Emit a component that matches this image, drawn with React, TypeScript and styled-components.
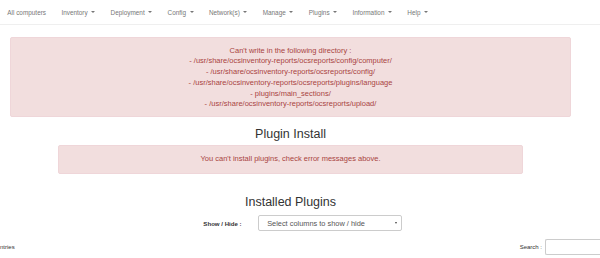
import styled, { createGlobalStyle } from "styled-components";

const menuItems = [
    { label: "All computers", dropdown: false },
    { label: "Inventory", dropdown: true },
    { label: "Deployment", dropdown: true },
    { label: "Config", dropdown: true },
    { label: "Network(s)", dropdown: true },
    { label: "Manage", dropdown: true },
    { label: "Plugins", dropdown: true },
    { label: "Information", dropdown: true },
    { label: "Help", dropdown: true },
];

const unwritableDirs = [
    "/usr/share/ocsinventory-reports/ocsreports/config/computer/",
    "/usr/share/ocsinventory-reports/ocsreports/config/",
    "/usr/share/ocsinventory-reports/ocsreports/plugins/language",
    "plugins/main_sections/",
    "/usr/share/ocsinventory-reports/ocsreports/upload/",
];

const App = () => {
    return (
        <>
            <GlobalStyle />
            <NavBar>
                {menuItems.map(item => (
                    <NavItem key={item.label}>
                        {item.label}
                        {item.dropdown && <Caret />}
                    </NavItem>
                ))}
            </NavBar>

            <Main>
                <Alert>
                    <AlertLine>Can't write in the following directory :</AlertLine>
                    {unwritableDirs.map(dir => (
                        <AlertLine key={dir}>- {dir}</AlertLine>
                    ))}
                </Alert>

                <Heading>Plugin Install</Heading>

                <Alert $inset>
                    <AlertLine>You can't install plugins, check error messages above.</AlertLine>
                </Alert>

                <Heading $spaced>Installed Plugins</Heading>

                <FilterRow>
                    <FilterLabel>Show / Hide :</FilterLabel>
                    <SelectBox>
                        Select columns to show / hide
                        <SelectCaret />
                    </SelectBox>
                </FilterRow>
            </Main>

            <TableTools>
                <SmallText>ntries</SmallText>
                <SearchGroup>
                    <SmallText>Search :</SmallText>
                    <SearchInput type="text" />
                </SearchGroup>
            </TableTools>
        </>
    );
};

const GlobalStyle = createGlobalStyle`
  html, body {
    margin: 0;
    padding: 0;
    background: #fff;
    overflow: hidden;
  }
  body {
    font-family: "Liberation Sans", Arial, sans-serif;
    color: #333;
  }
  * {
    box-sizing: border-box;
  }
`;

const NavBar = styled.nav`
  display: flex;
  align-items: center;
  height: 25px;
  background: #fff;
  border-bottom: 1px solid #efefef;
`;

const NavItem = styled.div`
  display: flex;
  align-items: center;
  padding: 0 7.7px;
  font-size: 6.4px;
  color: #777;
  white-space: nowrap;
  &:first-child {
    padding-left: 7.3px;
  }
`;

const Caret = styled.span`
  display: inline-block;
  margin-left: 3.5px;
  width: 0;
  height: 0;
  border-top: 2px solid #777;
  border-left: 2px solid transparent;
  border-right: 2px solid transparent;
`;

const Main = styled.main`
  width: 581px;
  padding: 0 10px;
  display: flex;
  flex-direction: column;
`;

const Alert = styled.div<{ $inset?: boolean }>`
  margin: ${props => (props.$inset ? "4.3px 48px 0" : "12px 0 0")};
  padding: ${props => (props.$inset ? "8px 8px" : "7.7px 8px 5.6px")};
  background-color: #f2dede;
  border: 1px solid #efd6d9;
  border-radius: 2px;
  color: #a94442;
  text-align: center;
  font-size: 7.5px;
  line-height: 10.7px;
`;

const AlertLine = styled.div`
  white-space: nowrap;
`;

const Heading = styled.h3<{ $spaced?: boolean }>`
  margin: ${props => (props.$spaced ? "20.7px" : "10.7px")} 0 0;
  font-size: 12.5px;
  line-height: 14px;
  font-weight: 500;
  color: #333;
  text-align: center;
`;

const FilterRow = styled.div`
  display: flex;
  align-items: center;
  justify-content: center;
  gap: 16px;
  margin-top: 6px;
  padding-left: 24px;
`;

const FilterLabel = styled.label`
  font-size: 6.1px;
  font-weight: bold;
  color: #333;
`;

const SelectBox = styled.div`
  display: flex;
  align-items: center;
  justify-content: space-between;
  width: 144px;
  height: 16.6px;
  padding: 0 4px 0 8.5px;
  border: 1px solid #ccc;
  border-radius: 2px;
  background: #fff;
  font-size: 7.4px;
  color: #555;
`;

const SelectCaret = styled.span`
  width: 0;
  height: 0;
  border-top: 2.5px solid #444;
  border-left: 1.7px solid transparent;
  border-right: 1.7px solid transparent;
`;

const TableTools = styled.div`
  display: flex;
  align-items: center;
  justify-content: space-between;
  width: 600px;
  margin-top: 7.7px;
`;

const SmallText = styled.span`
  font-size: 6px;
  color: #333;
`;

const SearchGroup = styled.div`
  display: flex;
  align-items: center;
  gap: 3px;
`;

/* the field runs on past the window edge, so only its left side is drawn */
const SearchInput = styled.input`
  width: 55px;
  height: 16px;
  margin: 0;
  padding: 0 4px;
  border: 1px solid #ccc;
  border-right: none;
  border-radius: 2px 0 0 2px;
  background: #fff;
  outline: none;
`;

export default App;
